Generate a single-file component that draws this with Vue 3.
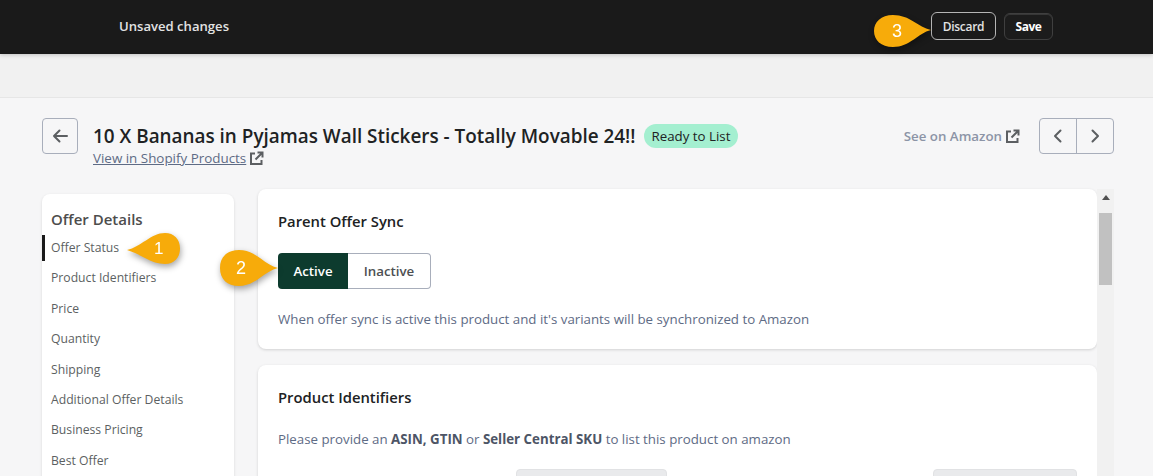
<script setup>
const navItems = ['Offer Status','Product Identifiers','Price','Quantity','Shipping','Additional Offer Details','Business Pricing','Best Offer']
</script>

<template>
  <div class="app">
    <header class="topbar">
      <span class="unsaved">Unsaved changes</span>
      <div class="top-actions">
        <button class="btn-discard">Discard</button>
        <button class="btn-save">Save</button>
      </div>
    </header>
    <div class="band"></div>
    <main class="page">
      <div class="head">
        <button class="back" aria-label="Back">
          <svg width="20" height="20" viewBox="0 0 20 20"><path d="M17 10H4M9.500 4.500 4 10l5.500 5.500" fill="none" stroke="#5c5f62" stroke-width="2" stroke-linecap="round" stroke-linejoin="round"/></svg>
        </button>
        <div class="titles">
          <div class="title-row">
            <h1>10 X Bananas in Pyjamas Wall Stickers - Totally Movable 24!!</h1>
            <span class="badge">Ready to List</span>
          </div>
          <a class="shop-link"><span>View in Shopify Products</span>
            <svg class="ext" width="15" height="15" viewBox="0 0 15 15"><path d="M6 2.500H2v10.500h10.500V9M8.500 1.500h5v5M13.500 1.500 6.500 8.500" fill="none" stroke="#5c5f62" stroke-width="2"/></svg>
          </a>
        </div>
        <a class="amazon"><span>See on Amazon</span>
          <svg class="ext" width="15" height="15" viewBox="0 0 15 15"><path d="M6 2.500H2v10.500h10.500V9M8.500 1.500h5v5M13.500 1.500 6.500 8.500" fill="none" stroke="#5c5f62" stroke-width="2"/></svg>
        </a>
        <div class="pager">
          <button aria-label="Previous"><svg width="20" height="20" viewBox="0 0 20 20"><path d="M12.500 4.500 7 10l5.500 5.500" fill="none" stroke="#5c5f62" stroke-width="2" stroke-linecap="round" stroke-linejoin="round"/></svg></button>
          <button aria-label="Next"><svg width="20" height="20" viewBox="0 0 20 20"><path d="M7.500 4.500 13 10l-5.500 5.500" fill="none" stroke="#5c5f62" stroke-width="2" stroke-linecap="round" stroke-linejoin="round"/></svg></button>
        </div>
      </div>
      <div class="body">
        <nav class="side">
          <h2>Offer Details</h2>
          <ul>
            <li v-for="(n,i) in navItems" :key="n" :class="{active:i===0}">{{ n }}</li>
          </ul>
        </nav>
        <div class="scroller">
          <div class="cards">
            <section class="card first">
              <h3>Parent Offer Sync</h3>
              <div class="toggle">
                <button class="on">Active</button>
                <button class="off">Inactive</button>
              </div>
              <p>When offer sync is active this product and it's variants will be synchronized to Amazon</p>
            </section>
            <section class="card second">
              <h3>Product Identifiers</h3>
              <p>Please provide an <b>ASIN, GTIN</b> or <b>Seller Central SKU</b> to list this product on amazon</p>
              <div class="id-row">
                <div class="field f1"></div>
                <div class="field f2"></div>
              </div>
            </section>
          </div>
          <div class="scrollbar">
            <svg width="8" height="5" viewBox="0 0 8 5"><path d="M4 0l4 5H0z" fill="#505050"/></svg>
            <div class="thumb"></div>
          </div>
        </div>
      </div>
    </main>

    <div class="callout c1">
      <svg width="64" height="44" viewBox="0 0 64 44"><path d="M2 21C16 18 26 4 40 4 49 4 55 10 55 19.500 55 29 49 35 40 35 26 35 16 25 2 21z" fill="#f7ab0a"/></svg>
      <span class="num n1">1</span>
    </div>
    <div class="callout c2">
      <svg width="72" height="50" viewBox="0 0 72 50"><path d="M64 23C50 20 42 5 25 5 13 5 6 12 6 23s7 18 19 18c17 0 25-15 39-18z" fill="#f7ab0a"/></svg>
      <span class="num n2">2</span>
    </div>
    <div class="callout c3">
      <svg width="72" height="46" viewBox="0 0 72 46"><path d="M63 20C50 17 42 5 25 5 13 5 6 12 6 21s7 16 19 16c17 0 25-14 38-17z" fill="#f7ab0a"/></svg>
      <span class="num n3">3</span>
    </div>
  </div>
</template>

<style>
html, body { margin: 0; overflow: hidden; background: #f6f6f7; }
</style>

<style scoped>
* { box-sizing: border-box; }
.app { position: relative; width: 1153px; height: 476px; overflow: hidden; font-family: "Open Sans", sans-serif; font-size: 13.300px; color: #202223; background: #f6f6f7; }
button { font-family: inherit; cursor: pointer; }
.topbar { height: 54px; background: #1a1a1a; display: flex; align-items: center; justify-content: space-between; padding: 0 100px 0 119px; box-shadow: 0 1px 4px rgba(0,0,0,.2); position: relative; }
.unsaved { color: #e3e3e3; font-weight: 600; font-size: 13.100px; margin-top: -3px; }
.top-actions { display: flex; align-items: center; gap: 8px; }
.btn-discard { width: 65px; height: 28px; background: transparent; border: 1px solid #b5b5b5; border-radius: 6px; color: #e3e3e3; font-weight: 600; font-size: 12px; letter-spacing: -.3px; padding: 0; margin-top: -2px; }
.btn-save { width: 49px; height: 27px; background: #1c1c1c; border: 1px solid #3f3f3f; border-radius: 6px; color: #fff; font-weight: 700; font-size: 12px; letter-spacing: -.5px; padding: 0; margin-top: -2px; box-shadow: inset 0 1px 0 rgba(255,255,255,.12); }
.band { height: 44px; background: #f1f1f1; border-bottom: 1px solid #e6e6e6; }
.page { padding: 20px 39px 0 42px; }
.head { display: flex; align-items: flex-start; height: 71px; }
.back { width: 36px; height: 36px; border: 1px solid #a8aebb; border-radius: 4px; background: #f6f6f7; display: flex; align-items: center; justify-content: center; padding: 0; flex: none; }
.titles { margin-left: 15px; flex: 1; }
.title-row { display: flex; align-items: center; gap: 8px; height: 35px; }
h1 { margin: 0; font-size: 18.900px; font-weight: 550; color: #202223; white-space: nowrap; }
.badge { background: #a4efd0; border-radius: 12px; font-size: 13.300px; height: 24px; line-height: 24px; padding: 0 8px; }
.shop-link { display: flex; align-items: center; gap: 3px; color: #5e6b85; font-size: 13.400px; margin-top: -4px; }
.shop-link span { text-decoration: underline; }
.amazon { display: flex; align-items: center; gap: 3px; color: #8c94a6; font-weight: 600; font-size: 13.300px; margin: 9px 19px 0 0; }
.pager { display: flex; width: 75px; height: 36px; border: 1px solid #a8aebb; border-radius: 4px; flex: none; }
.pager button { flex: 1; border: 0; background: transparent; padding: 0; display: flex; align-items: center; justify-content: center; }
.pager button + button { border-left: 1px solid #a8aebb; }
.body { display: flex; gap: 24px; align-items: flex-start; }
.side { width: 192px; margin-top: 5px; background: #fff; border-radius: 8px; padding: 15px 0 0; box-shadow: 0 1px 3px rgba(0,0,0,.12); height: 300px; flex: none; }
.side h2 { margin: 0 0 0 9px; font-size: 15px; font-weight: 600; color: #4d4d4d; line-height: 20px; }
.side ul { list-style: none; margin: 6px 0 0; padding: 0; }
.side li { height: 26px; line-height: 26px; padding-left: 9px; margin-bottom: 4.400px; color: #5c5f62; font-size: 12.200px; position: relative; }
.side li.active::before { content: ""; position: absolute; left: 0; top: 0; bottom: 0; width: 3px; background: #1a1a1a; }
.scroller { display: flex; flex: 1; height: 300px; min-width: 0; }
.cards { flex: 1; min-width: 0; }
.card { background: #fff; border-radius: 8px; box-shadow: 0 1px 3px rgba(0,0,0,.15); padding: 20px; }
.card.first { height: 160px; margin-bottom: 16px; }
.card.second { height: 200px; }
h3 { margin: 0; font-size: 14.800px; font-weight: 600; color: #202223; line-height: 24px; }
.toggle { display: inline-flex; margin-top: 20px; height: 36px; vertical-align: top; }
.toggle button { padding: 0; font-size: 13.300px; font-weight: 600; }
.toggle .on { width: 70px; background: #0d3b2e; color: #fff; border: 0; border-radius: 4px 0 0 4px; }
.toggle .off { width: 83px; background: #fff; color: #4d4f52; border: 1px solid #a8aebb; border-left: 0; border-radius: 0 4px 4px 0; }
p { margin: 0; font-size: 13.300px; color: #5e6b85; line-height: 20px; }
.first p { margin-top: 20px; }
.second p { margin-top: 20px; }
b { font-weight: 700; color: #4d5566; }
.id-row { display: flex; margin: 20px 0 0 238px; gap: 266px; }
.field { height: 60px; background: #e9eaec; border: 1px solid #e1e2e4; border-radius: 4px; }
.f1 { width: 151px; }
.f2 { width: 144px; }
.scrollbar { width: 17px; background: #f1f1f1; height: 300px; display: flex; flex-direction: column; align-items: center; padding-top: 6px; flex: none; }
.thumb { width: 13px; height: 72px; background: #c1c1c1; margin-top: 13px; }
.callout { position: absolute; filter: drop-shadow(1px 3px 3px rgba(0,0,0,.35)); }
.callout svg { display: block; }
.num { position: absolute; color: #fff; font-family: "Liberation Sans", sans-serif; font-size: 17px; line-height: 20px; }
.c1 { left: 125px; top: 229px; }
.n1 { left: 29px; top: 10px; }
.c2 { left: 214px; top: 245px; }
.n2 { left: 22px; top: 13px; font-size: 18px; }
.c3 { left: 868px; top: 10px; }
.n3 { left: 24px; top: 11px; font-size: 18px; }
</style>
